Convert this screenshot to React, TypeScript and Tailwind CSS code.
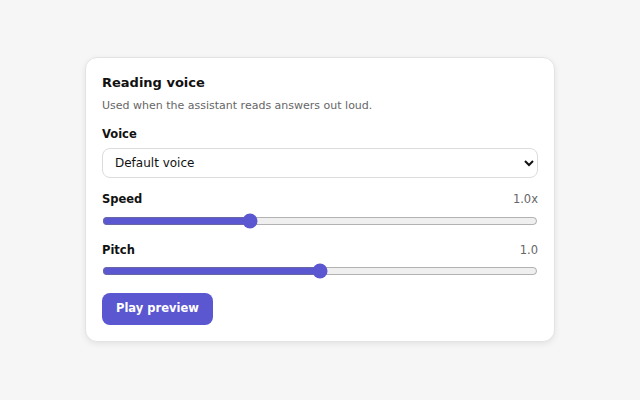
import { useState } from "react";

export default function App() {
  const [speed, setSpeed] = useState(1.0);
  const [pitch, setPitch] = useState(1.0);

  return (
    <div className="flex h-[400px] w-[640px] items-center justify-center bg-[#f6f6f6] font-['DejaVu_Sans',sans-serif]">
      <div className="mb-[1px] w-[470px] rounded-xl border border-[#e3e3e3] bg-white px-4 pt-[15px] pb-4 shadow-[0_2px_6px_rgba(0,0,0,0.08)]">
        <h2 className="text-[13px] font-bold leading-5 text-[#111]">Reading voice</h2>
        <p className="mt-[5px] text-[11px] leading-4 text-[#666]">
          Used when the assistant reads answers out loud.
        </p>

        {/* Voice */}
        <label className="mt-[12px] block text-[11.5px] font-bold leading-4 text-[#111]">Voice</label>
        <select className="mt-[6px] h-[30px] w-full rounded-lg border border-[#dcdcdc] bg-white px-2 text-[12px] text-[#111]">
          <option>Default voice</option>
          <option>Warm voice</option>
          <option>Bright voice</option>
        </select>

        {/* Speed */}
        <div className="mt-[13px] flex items-center justify-between text-[11.5px] leading-4">
          <span className="font-bold text-[#111]">Speed</span>
          <span className="text-[#666]">{speed.toFixed(1)}x</span>
        </div>
        <input
          type="range"
          min={0.5}
          max={2}
          step={0.1}
          value={speed}
          onChange={(e) => setSpeed(Number(e.target.value))}
          className="mt-[6px] block w-full accent-[#5b57d1]"
        />

        {/* Pitch */}
        <div className="mt-[13px] flex items-center justify-between text-[11.5px] leading-4">
          <span className="font-bold text-[#111]">Pitch</span>
          <span className="text-[#666]">{pitch.toFixed(1)}</span>
        </div>
        <input
          type="range"
          min={0}
          max={2}
          step={0.1}
          value={pitch}
          onChange={(e) => setPitch(Number(e.target.value))}
          className="mt-[5px] block w-full accent-[#5b57d1]"
        />

        <button className="mt-[14px] h-[32px] rounded-lg bg-[#5b57d1] px-[14px] text-[11.5px] font-bold text-white">
          Play preview
        </button>
      </div>
    </div>
  );
}
